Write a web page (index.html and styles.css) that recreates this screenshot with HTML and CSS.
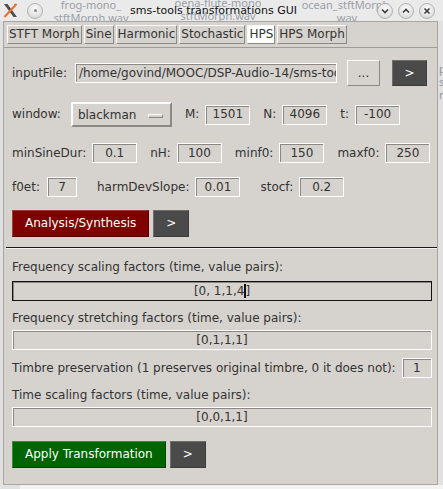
FILE: index.html
```html
<!DOCTYPE html>
<html>
<head>
<meta charset="utf-8">
<title>sms-tools transformations GUI</title>
<link rel="stylesheet" href="styles.css">
</head>
<body>
<div class="titlebar">
  <span class="ghost g1">frog-mono_<br>stftMorph.wav</span>
  <span class="ghost g2">oena-flute-mono<br>stftMorph.wav</span>
  <span class="ghost g3">ocean_stftMorph.<br>wav</span>
  <svg class="appicon" width="15" height="15" viewBox="0 0 15 15">
    <path d="M1 1 L4.5 1 L14 14 L10.5 14 Z" fill="#4d4d4d"/>
    <path d="M13.5 1 L1.5 14" stroke="#e9712a" stroke-width="2"/>
    <path d="M11 1 L14 1 L12 3.5 Z" fill="#e9712a"/>
  </svg>
  <span class="tbtn menu"><span class="dot"></span></span>
  <span class="title">sms-tools transformations GUI</span>
  <span class="tbtns">
    <span class="tbtn"><svg width="16" height="16" viewBox="0 0 16 16"><path d="M5 6.5 L8 9.5 L11 6.5" fill="none" stroke="#3c3c3c" stroke-width="1.6"/></svg></span>
    <span class="tbtn"><svg width="16" height="16" viewBox="0 0 16 16"><path d="M5 9.5 L8 6.5 L11 9.5" fill="none" stroke="#3c3c3c" stroke-width="1.6"/></svg></span>
    <span class="tbtn"><svg width="16" height="16" viewBox="0 0 16 16"><path d="M5.5 5.5 L10.5 10.5 M10.5 5.5 L5.5 10.5" fill="none" stroke="#3c3c3c" stroke-width="1.6"/></svg></span>
  </span>
</div>

<div class="win">
  <div class="tabbar">
    <span class="tab">STFT Morph</span>
    <span class="tab">Sine</span>
    <span class="tab">Harmonic</span>
    <span class="tab">Stochastic</span>
    <span class="tab active">HPS</span>
    <span class="tab">HPS Morph</span>
  </div>

  <div class="content">
    <div class="row row-file">
      <span class="lbl">inputFile:</span>
      <span class="entry entry-file">/home/govind/MOOC/DSP-Audio-14/sms-too</span>
      <span class="btn btn-light">...</span>
      <span class="btn btn-dark btn-go">&gt;</span>
    </div>

    <div class="row row-win">
      <span class="field field-window">
        <span class="lbl">window:</span>
        <span class="optmenu">blackman<span class="indicator"></span></span>
      </span>
      <span class="field"><span class="lbl">M:</span><span class="entry num">1501</span></span>
      <span class="field"><span class="lbl">N:</span><span class="entry num">4096</span></span>
      <span class="field"><span class="lbl">t:</span><span class="entry num">-100</span></span>
    </div>

    <div class="row row-params">
      <span class="field"><span class="lbl">minSineDur:</span><span class="entry num">0.1</span></span>
      <span class="field"><span class="lbl">nH:</span><span class="entry num">100</span></span>
      <span class="field"><span class="lbl">minf0:</span><span class="entry num">150</span></span>
      <span class="field"><span class="lbl">maxf0:</span><span class="entry num">250</span></span>
    </div>

    <div class="row row-params2">
      <span class="field field-f0et"><span class="lbl">f0et:</span><span class="entry num small">7</span></span>
      <span class="field"><span class="lbl">harmDevSlope:</span><span class="entry num">0.01</span></span>
      <span class="field"><span class="lbl">stocf:</span><span class="entry num">0.2</span></span>
    </div>

    <div class="row row-buttons">
      <span class="btn btn-red">Analysis/Synthesis</span>
      <span class="btn btn-dark btn-go2">&gt;</span>
    </div>

    <div class="separator"></div>

    <div class="label-line first">Frequency scaling factors (time, value pairs):</div>
    <div class="entry wide focused">[0, 1,1,4<span class="caret"></span>]</div>

    <div class="label-line">Frequency stretching factors (time, value pairs):</div>
    <div class="entry wide">[0,1,1,1]</div>

    <div class="row row-timbre">
      <span class="lbl">Timbre preservation (1 preserves original timbre, 0 it does not):</span>
      <span class="entry num tiny">1</span>
    </div>

    <div class="label-line">Time scaling factors (time, value pairs):</div>
    <div class="entry wide">[0,0,1,1]</div>

    <div class="row row-buttons row-apply">
      <span class="btn btn-green">Apply Transformation</span>
      <span class="btn btn-dark btn-go2">&gt;</span>
    </div>
  </div>
</div>
<div class="deskfrag">p<br>s<br>r</div>
<div class="deskbottom"></div>
</body>
</html>
```

FILE: styles.css
```css
* { box-sizing: border-box; }
html, body { margin: 0; padding: 0; }
body {
  width: 443px;
  height: 489px;
  overflow: hidden;
  position: relative;
  background: #e1e1e1;
  font-family: "DejaVu Sans", sans-serif;
  font-size: 12px;
  color: #333;
}

/* ---------- title bar ---------- */
.titlebar {
  position: relative;
  height: 21px;
  display: flex;
  align-items: center;
  padding: 0 8px 0 3px;
  background: #eaeaea;
  overflow: hidden;
}
.ghost {
  position: absolute;
  top: -2px;
  font-family: "Noto Sans", sans-serif;
  font-size: 11px;
  line-height: 13px;
  color: #9aa0a8;
  text-align: center;
  white-space: nowrap;
}
.g1 { left: 41px; width: 100px; }
.g2 { left: 166px; width: 104px; top: -4px; }
.g3 { left: 297px; width: 100px; }
.appicon { position: relative; display: block; flex: none; }
.tbtn {
  position: relative;
  width: 16px;
  height: 16px;
  flex: none;
  border-radius: 50%;
  border: 1px solid #b3b3b3;
  background: radial-gradient(circle at 50% 35%, #fbfbfb 0%, #e4e4e4 60%, #cfcfcf 100%);
  display: flex;
  align-items: center;
  justify-content: center;
}
.tbtn svg { display: block; margin: -1px; }
.menu { margin-left: 9px; }
.menu .dot { width: 3px; height: 3px; border-radius: 50%; background: #8a8a8a; }
.title {
  position: relative;
  margin-left: 87px;
  font-size: 11px;
  color: #111;
  white-space: nowrap;
}
.tbtns { margin-left: auto; display: flex; gap: 5px; position: relative; }

/* ---------- window ---------- */
.win {
  margin-left: 3px;
  width: 435px;
  height: 464px;
  border: 1px solid #a9a5a1;
  background: #d6d2ce;
}
.tabbar {
  height: 26px;
  display: flex;
  gap: 2px;
  padding: 3px 3px 0;
  border-bottom: 1px solid #a09c98;
}
.tab {
  height: 19px;
  padding: 1px 1px;
  line-height: 15px;
  border: 1px solid;
  border-color: #fbfbfb #8c8884 #8c8884 #fbfbfb;
  white-space: nowrap;
}
.tab.active { background: #fff; }

.content { padding: 0 5px 0 8px; }

.row { display: flex; align-items: center; }
.field { display: flex; align-items: center; gap: 6px; }
.lbl { white-space: nowrap; line-height: 15px; }

.entry {
  height: 20px;
  border: 1px solid #fdfdfd;
  box-shadow: inset 1px 1px 0 #8b8783;
  background: #d6d2ce;
  display: flex;
  align-items: center;
  justify-content: center;
  line-height: 15px;
  white-space: nowrap;
  overflow: hidden;
  color: #333;
}
.entry.num { width: 45px; }
.entry.small { width: 30px; }
.entry.tiny { width: 31px; }
.entry.wide { width: 420px; }
.entry.focused { border-color: #111; }
.caret {
  display: inline-block;
  width: 2px;
  height: 14px;
  background: #111;
  vertical-align: middle;
  margin-right: -1px;
}

/* row 1 */
.row-file { margin-top: 12px; height: 26px; }
.entry-file {
  width: 262px;
  margin-left: 8px;
  justify-content: flex-start;
  padding-left: 3px;
}
.btn {
  height: 26px;
  display: flex;
  align-items: center;
  justify-content: center;
  white-space: nowrap;
  line-height: 15px;
  border: 1px solid;
}
.btn-light {
  width: 33px;
  margin-left: 10px;
  border-color: #fbfbfb #8c8884 #8c8884 #fbfbfb;
  color: #333;
}
.btn-dark {
  background: #4a4a4a;
  border-color: #6e6e6e #3c3c3c #3c3c3c #6e6e6e;
  color: #fff;
}
.btn-go { width: 35px; margin-left: 12px; }

/* row 2 */
.row-win { margin-top: 16px; height: 25px; gap: 13px; }
.field-window { gap: 10px; }
.optmenu {
  width: 101px;
  height: 25px;
  border: 2px solid;
  border-color: #fbfbfb #8c8884 #8c8884 #fbfbfb;
  display: flex;
  align-items: center;
  padding-left: 5px;
  position: relative;
}
.indicator {
  position: absolute;
  right: 7px;
  top: 10px;
  width: 15px;
  height: 4px;
  border: 1px solid;
  border-color: #fbfbfb #8c8884 #8c8884 #fbfbfb;
}

/* row 3 / 4 */
.row-params { margin-top: 16px; height: 20px; gap: 13px; }
.row-params2 { margin-top: 14px; height: 20px; gap: 20px; }
.field-f0et { gap: 7px; }

/* buttons */
.row-buttons { margin-top: 13px; height: 27px; gap: 4px; }
.row-buttons .btn { height: 27px; }
.btn-red {
  background: #800000;
  border-color: #a23a3a #5c0000 #5c0000 #a23a3a;
  color: #fff;
  padding: 0 12px;
}
.btn-green {
  background: #006400;
  border-color: #3a8a3a #004400 #004400 #3a8a3a;
  color: #fff;
  padding: 0 12px;
}
.btn-go2 { width: 36px; }

.separator {
  margin: 10px -5px 0 -6px;
  height: 2px;
  border-top: 1px solid #1a1a1a;
  border-bottom: 1px solid #f4f4f4;
}

.label-line { line-height: 15px; margin-top: 10px; margin-bottom: 4px; white-space: nowrap; }
.label-line.first { margin-top: 11px; margin-bottom: 6px; }

.row-timbre { margin-top: 8px; height: 20px; gap: 6px; }

.row-apply { margin-top: 14px; }

/* desktop bits */
.deskfrag {
  position: absolute;
  left: 439px;
  top: 62px;
  font-family: "Noto Sans", sans-serif;
  font-size: 11px;
  line-height: 13px;
  color: #8f97a3;
}
.deskbottom {
  position: absolute;
  left: 20px;
  right: 0;
  top: 485px;
  height: 4px;
  background: #f3f3f3;
}
```
